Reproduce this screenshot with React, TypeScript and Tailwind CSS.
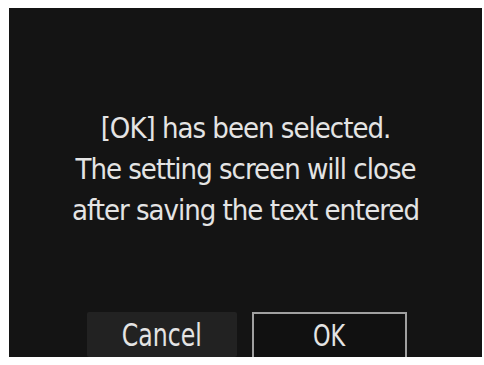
import React from "react";

export default function App() {
  return (
    <div className="w-[484px] h-[365px] bg-white pt-[8px] pl-[9px]">
      <div
        className="w-[473px] h-[349px] bg-[#141414] flex flex-col text-[#e4e4e4]"
        style={{ fontFamily: '"DejaVu Sans Condensed", "DejaVu Sans", sans-serif' }}
      >
        <div className="pt-[100px] text-center text-[29px] leading-[41px] tracking-[-1px] h-[304px]">
          <div>[OK] has been selected.</div>
          <div>The setting screen will close</div>
          <div>after saving the text entered</div>
        </div>
        <div className="flex pl-[78px] gap-[15px] h-[45px]">
          <div className="w-[150px] h-full bg-[#222222] rounded-[2px] flex items-center justify-center text-[32px]">
            <span className="inline-block scale-x-[0.82]">Cancel</span>
          </div>
          <div className="w-[155px] h-full border-2 border-b-0 border-[#a0a0a0] bg-[#111111] flex items-center justify-center text-[31px]">
            <span className="inline-block scale-x-[0.8]">OK</span>
          </div>
        </div>
      </div>
    </div>
  );
}
